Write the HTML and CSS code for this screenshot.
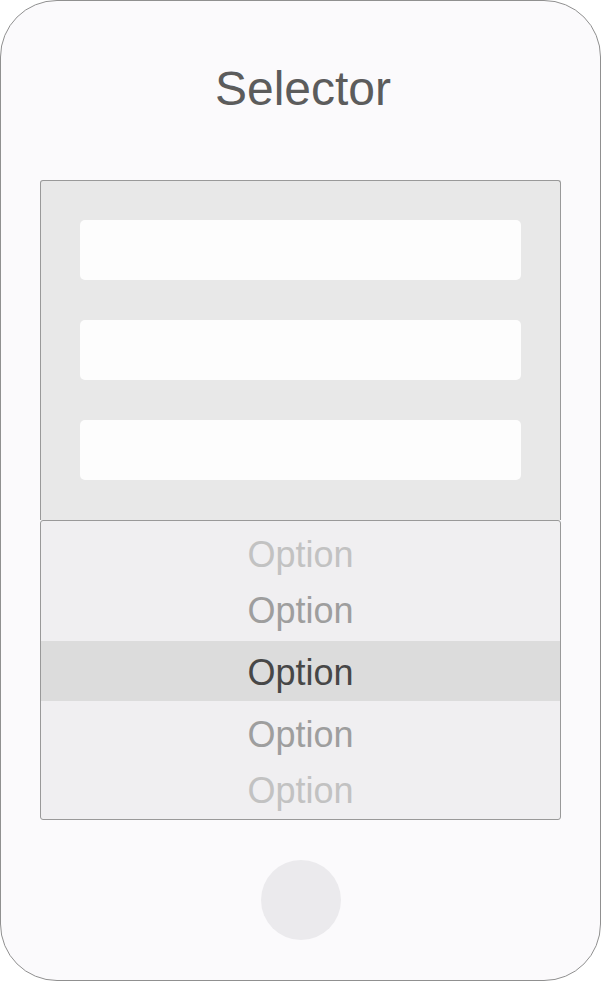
FILE: index.html
```html
<!DOCTYPE html>
<html lang="en">
<head>
<meta charset="utf-8">
<title>Selector</title>
<link rel="stylesheet" href="styles.css">
</head>
<body>
<div class="phone">
  <h1 class="title">Selector</h1>
  <div class="form-panel">
    <div class="field"></div>
    <div class="field"></div>
    <div class="field"></div>
  </div>
  <div class="picker">
    <div class="opt opt-far opt-first">Option</div>
    <div class="opt opt-near">Option</div>
    <div class="opt opt-selected">Option</div>
    <div class="opt opt-near opt-after">Option</div>
    <div class="opt opt-far">Option</div>
  </div>
  <div class="home-button"></div>
</div>
</body>
</html>
```
FILE: styles.css
```css
html, body {
  margin: 0;
  padding: 0;
  background: #ffffff;
}

body {
  font-family: "Liberation Sans", Arial, sans-serif;
}

.phone {
  box-sizing: border-box;
  width: 601px;
  height: 981px;
  border: 1px solid #909090;
  border-radius: 57px;
  background: #fbfafc;
  padding-top: 60px;
  display: flex;
  flex-direction: column;
  align-items: center;
}

.title {
  margin: 0;
  padding-left: 5px;
  font-weight: normal;
  font-size: 48px;
  line-height: 56px;
  height: 56px;
  color: #5c5c5c;
  text-align: center;
}

.form-panel {
  box-sizing: border-box;
  margin-top: 63px;
  width: 521px;
  height: 340px;
  background: #e8e8e8;
  border: 1px solid #999999;
  border-bottom: none;
  border-radius: 3px 3px 0 0;
  padding: 39px 39px 0;
  display: flex;
  flex-direction: column;
  gap: 40px;
}

.field {
  height: 60px;
  background: #fdfdfd;
  border-radius: 5px;
}

.picker {
  box-sizing: border-box;
  width: 521px;
  height: 300px;
  background: #f0eff1;
  border: 1px solid #999999;
  border-radius: 3px;
  padding-top: 6px;
  display: flex;
  flex-direction: column;
}

.opt {
  height: 56px;
  line-height: 56px;
  font-size: 36px;
  text-align: center;
  flex-shrink: 0;
}

.opt-far {
  color: #c2c2c2;
}

.opt-near {
  color: #9e9e9e;
}

.opt-selected {
  box-sizing: border-box;
  margin-top: 2px;
  height: 60px;
  padding-top: 4px;
  background: #dcdcdc;
  color: #474747;
}

.opt-after {
  margin-top: 6px;
}

.home-button {
  margin-top: 40px;
  width: 80px;
  height: 80px;
  border-radius: 50%;
  background: #ebeaed;
}
```
